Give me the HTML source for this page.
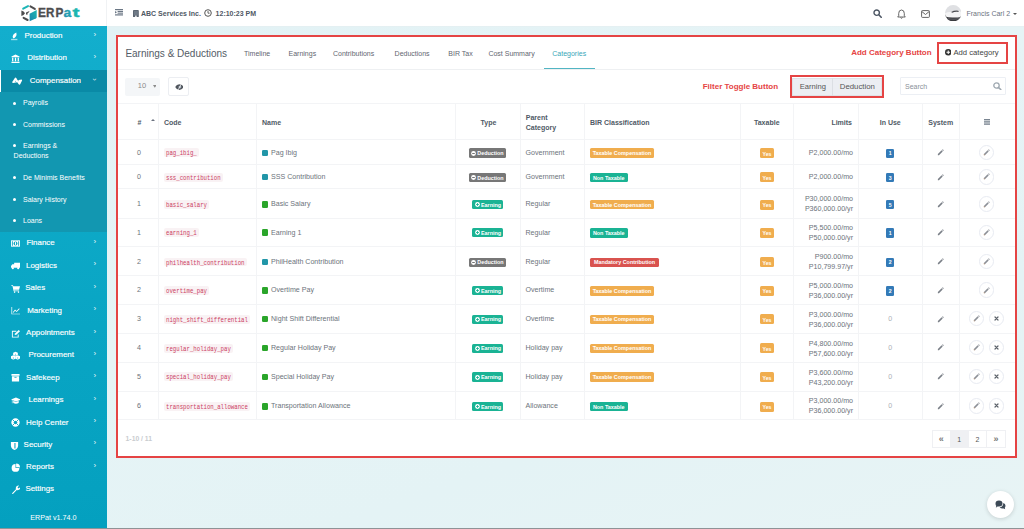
<!DOCTYPE html>
<html><head><meta charset="utf-8">
<style>
*{box-sizing:border-box}
html,body{margin:0;padding:0}
body{width:1024px;height:529px;overflow:hidden;position:relative;font-family:"Liberation Sans",sans-serif;background:#e6f2f5}
.abs{position:absolute}
#bg{position:absolute;left:107px;top:26px;width:917px;height:503px;background:linear-gradient(160deg,#e2f2f5 0%,#e6f4f6 40%,#e4f3f5 70%,#e8f4f5 100%)}
#hdr{position:absolute;left:0;top:0;width:1024px;height:26px;background:#fff;box-shadow:0 0.5px 0 #e6eef0}
#logo{position:absolute;left:0;top:0;width:107px;height:26px;border-right:1px solid #f0f2f4}
#side{position:absolute;left:0;top:26px;width:107px;height:503px;background:linear-gradient(180deg,#13aecd 0%,#0eaac8 30%,#09a5c4 60%,#04a0bf 100%)}
#sub{position:absolute;left:0;top:92px;width:107px;height:139.6px;background:#1297b1}
#act{position:absolute;left:0;top:69.7px;width:107px;height:22.3px;background:#0a8aa6;border-left:1.5px solid #fff}
.si{position:absolute;color:#fff;font-size:7.95px;line-height:9px;white-space:nowrap;font-weight:normal;-webkit-text-stroke:0.2px rgba(255,255,255,0.85)}
.ss{position:absolute;color:#fff;font-size:7px;line-height:8px;white-space:nowrap}
.sic{position:absolute}
.chev{position:absolute;left:93.5px;color:#fff;font-size:8px;line-height:9px;opacity:0.9}
.bul{position:absolute;left:13px;width:3px;height:3px;border-radius:50%;background:#fff}
#card{position:absolute;left:118px;top:37px;width:897px;height:419px;background:#fff}
#redc{position:absolute;left:116px;top:35px;width:901px;height:423px;border:2px solid #e54444}
.hl{position:absolute;left:118px;width:897px;height:1px;background:#f3f4f6}
.vl{position:absolute;width:1px;background:#f3f4f6}
.th{position:absolute;font-size:7px;font-weight:bold;color:#505a66;line-height:8px;white-space:nowrap}
.td{position:absolute;font-size:7.1px;color:#6c737b;line-height:9px;white-space:nowrap}
.code{position:absolute;font-family:"Liberation Mono",monospace;font-size:5.7px;height:8.9px;line-height:9.3px;color:#cc3d62;background:#f9f2f4;padding:0 2px;border-radius:2px;white-space:nowrap}
.code span{display:inline-block;transform:translateY(0.5px) scaleY(1.18);}
.sq{position:absolute;width:6.5px;height:6.5px;border-radius:1.3px}
.cell{position:absolute;height:10px}
.lb{position:absolute;top:0;height:9.4px;border-radius:1.5px;color:#fff;font-size:5.4px;font-weight:bold;line-height:9.4px;padding-top:0.7px;white-space:nowrap;padding-left:9px}
.lb .ci{position:absolute;top:2.2px}
.lb2{position:absolute;left:0;top:0;height:9.5px;border-radius:1.5px;color:#fff;font-size:5.4px;font-weight:bold;line-height:9.5px;padding-top:0.7px;white-space:nowrap;text-align:center}
.yes{position:absolute;width:14px;height:10px;background:#f0ad4e;border-radius:1.5px;color:#fff;font-size:5.2px;font-weight:bold;line-height:10px;padding-top:0.6px;text-align:center}
.iu{position:absolute;width:8.3px;height:9.3px;background:#337ab7;border-radius:1.3px;color:#fff;font-size:5.2px;font-weight:bold;line-height:9.3px;padding-top:0.6px;text-align:center}
.pen{position:absolute;width:7px;height:7px;line-height:0}
.cb{position:absolute;width:15.4px;height:15.4px;border:1px solid #e8ebf2;border-radius:50%;display:flex;align-items:center;justify-content:center;background:#fff}
.sortc{position:absolute;width:0;height:0;border-left:2px solid transparent;border-right:2px solid transparent;border-bottom:2.5px solid #6b7280}
.menuic{position:absolute;width:6px;height:5px;border-top:1.2px solid #505a66;border-bottom:1.2px solid #505a66}
.menuic:after{content:"";position:absolute;left:0;top:0.7px;width:6px;height:1.2px;background:#505a66}
.tab{position:absolute;top:48.8px;font-size:7px;color:#5f6670;white-space:nowrap;line-height:9px}
.red{position:absolute;color:#e54444;font-weight:bold;font-size:8px;white-space:nowrap;line-height:9px}
.pg{position:absolute;top:430.3px;height:17.5px;border:1px solid #eff0f3;font-size:7px;color:#555;line-height:17px;text-align:center}
</style></head><body>
<div id="bg"></div>
<div id="hdr"></div>
<div id="logo">
 <svg class="abs" style="left:18px;top:2.5px" width="22" height="20" viewBox="0 0 22 20">
  <defs><linearGradient id="lg1" x1="0" y1="1" x2="1" y2="0"><stop offset="0" stop-color="#1a86ae"/><stop offset="1" stop-color="#1cb8b0"/></linearGradient></defs>
  <path d="M5.2 5.7 L10 3.1" stroke="#1db6b6" stroke-width="2" stroke-linecap="round"/>
  <path d="M12.4 3.4 L16.8 5.9" stroke="#4d4d4f" stroke-width="2" stroke-linecap="round"/>
  <path d="M3.4 7.6 L5.6 8.5 L7 10.3 L5.6 12.1 L3.4 13 Z" fill="#4d4d4f"/>
  <path d="M8 9.4 L11.5 8 L10.8 9.6 L9.7 10.1 L9.4 11.8 L8 11.5 Z" fill="#4d4d4f"/>
  <path d="M5.6 14.8 L9.6 17" stroke="#4d4d4f" stroke-width="2" stroke-linecap="round"/>
  <path d="M11.6 10.8 L18.7 7 L18.7 14.5 Q18.6 15 18.2 15.2 L11.6 18.2 Z" fill="url(#lg1)"/>
 </svg>
 <svg class="abs" style="left:0;top:0" width="107" height="26" viewBox="0 0 107 26">
  <defs><linearGradient id="lg2" x1="0" y1="1" x2="1" y2="0"><stop offset="0" stop-color="#2a8db0"/><stop offset="1" stop-color="#1bb5b2"/></linearGradient></defs>
  <g font-family="Liberation Sans" font-weight="bold" font-size="13.2" stroke-width="0.35">
   <text transform="translate(38 17.3) scale(0.9 1)" fill="#4d4d4f" stroke="#4d4d4f">E</text>
   <text transform="translate(46.1 17.3) scale(0.88 1)" fill="#4d4d4f" stroke="#4d4d4f">R</text>
   <text transform="translate(55.6 17.3) scale(0.9 1)" fill="#4d4d4f" stroke="#4d4d4f">P</text>
   <text transform="translate(63.6 17.3) scale(1.05 1)" fill="url(#lg2)" stroke="#2597b0">a</text>
   <text transform="translate(72.6 17.3) scale(1.6 1)" fill="#1bb6b0" stroke="#1bb6b0">t</text>
  </g>
 </svg>
</div>
<!-- header content -->
<svg class="abs" style="left:115px;top:9.3px" width="8" height="6.5" viewBox="0 0 8 6.5"><rect x="0" y="0" width="8" height="1.2" fill="#6b7785"/><rect x="2.6" y="1.9" width="5.4" height="1.1" fill="#6b7785"/><rect x="2.6" y="3.6" width="5.4" height="1.1" fill="#6b7785"/><path d="M0 1.9 L2 3.25 L0 4.6 Z" fill="#6b7785"/><rect x="0" y="5.3" width="8" height="1.2" fill="#6b7785"/></svg>
<svg class="abs" style="left:133.2px;top:9.5px" width="5.8" height="7.2" viewBox="0 0 5.8 7.2"><rect x="0" y="0" width="5.8" height="7.2" rx="0.8" fill="#5a6470"/><rect x="0.9" y="0.8" width="4" height="4.5" fill="#6f7a86"/><rect x="2.2" y="5.6" width="1.4" height="1.6" fill="#fff"/></svg>
<div class="abs" style="left:141px;top:9px;font-size:7px;font-weight:bold;color:#4f5864;line-height:9px;white-space:nowrap">ABC Services Inc.</div>
<svg class="abs" style="left:203.8px;top:9px" width="8" height="8" viewBox="0 0 8 8"><circle cx="4" cy="4" r="3.3" fill="none" stroke="#555" stroke-width="1"/><path d="M4 2 V4.2 H5.6" fill="none" stroke="#555" stroke-width="0.9"/></svg>
<div class="abs" style="left:215.6px;top:9px;font-size:7px;font-weight:bold;color:#4f5864;line-height:9px;white-space:nowrap">12:10:23 PM</div>
<svg class="abs" style="left:872.5px;top:9px" width="9" height="9" viewBox="0 0 9 9"><circle cx="3.7" cy="3.7" r="2.7" fill="none" stroke="#4b5563" stroke-width="1.4"/><path d="M5.8 5.8 L8.2 8.2" stroke="#4b5563" stroke-width="1.6" stroke-linecap="round"/></svg>
<svg class="abs" style="left:896.5px;top:8.5px" width="9" height="10" viewBox="0 0 9 10"><path d="M4.5 1 Q7.3 1 7.3 4.5 V6.8 L8.3 8 H0.7 L1.7 6.8 V4.5 Q1.7 1 4.5 1 Z" fill="none" stroke="#555" stroke-width="0.9"/><path d="M3.5 8.6 Q4.5 10 5.5 8.6" fill="none" stroke="#555" stroke-width="0.9"/></svg>
<svg class="abs" style="left:920.5px;top:9.5px" width="9" height="8" viewBox="0 0 9 8"><rect x="0.6" y="0.6" width="7.8" height="6.8" rx="0.8" fill="none" stroke="#555" stroke-width="0.9"/><path d="M0.8 1.5 L4.5 4.5 L8.2 1.5" fill="none" stroke="#555" stroke-width="0.9"/></svg>
<svg class="abs" style="left:944.9px;top:4.5px" width="16.4" height="16.4" viewBox="0 0 16 16"><defs><clipPath id="av"><circle cx="8" cy="8" r="8"/></clipPath></defs><g clip-path="url(#av)"><rect width="16" height="16" fill="#dfe0e3"/><rect y="9.5" width="16" height="7" fill="#3a3b3f"/><path d="M0 8 Q3 6.5 6 6.8 Q9 5 13 5.5 Q15.5 6 16 7.5 L16 11.5 Q12 12.5 8 12.2 Q3 12.3 0 11 Z" fill="#f4f4f5"/><path d="M6 6.8 Q9 5 13 5.5 L13.5 6.8 Q10 6.2 7 7.5 Z" fill="#4a4b50"/><path d="M2 12.5 Q8 14 14 12.5 L14 14 Q8 15.2 2 14 Z" fill="#55565b"/></g></svg>
<div class="abs" style="left:966.5px;top:9.3px;font-size:7px;color:#6b7280;line-height:9px;white-space:nowrap">Francis Carl 2</div>
<div class="abs" style="left:1012.5px;top:12.5px;width:0;height:0;border-left:2.3px solid transparent;border-right:2.3px solid transparent;border-top:2.6px solid #555"></div>

<div id="side"></div>
<div id="sub"></div>
<div id="act"></div>
<div class="si" style="left:24.5px;top:31.1px">Production</div>
<svg class="sic" style="left:10.5px;top:32.199999999999996px" width="9" height="9" viewBox="0 0 10 10"><path d="M5.9 0.6 Q6.8 3.2 5.2 5.2 Q3.8 7 2.3 6.9 Q1.3 5.2 2.5 3.1 Q3.8 1.3 5.9 0.6 Z" fill="#fff"/><rect x="0.1" y="7.6" width="7" height="1.5" fill="rgba(255,255,255,0.6)"/></svg>
<div class="chev" style="top:29.6px">&#8250;</div>
<div class="si" style="left:27.2px;top:53.3px">Distribution</div>
<svg class="sic" style="left:11.0px;top:53.8px" width="9" height="9" viewBox="0 0 10 10"><path d="M5 0.5 L9.5 2.8 V3.6 H0.5 V2.8 Z M1.2 4.2 H2.6 V8 H1.2 Z M4.3 4.2 H5.7 V8 H4.3 Z M7.4 4.2 H8.8 V8 H7.4 Z M0.5 8.5 H9.5 V10 H0.5 Z" fill="#fff"/></svg>
<div class="chev" style="top:51.8px">&#8250;</div>
<div class="si" style="left:29.8px;top:75.7px">Compensation</div>
<svg class="sic" style="left:11.7px;top:76.89999999999999px" width="11" height="10" viewBox="0 0 11 10"><path d="M0.2 5 L3 0.8 Q3.6 0.3 4.3 0.9 L5.6 3.2 L9.3 2.4 Q10.3 2.4 10.1 3.4 L8.2 7.3 Q7.6 8 6.9 7.4 L5.2 5.2 L1.2 6 Q0 6 0.2 5 Z" fill="#fff"/><circle cx="3.6" cy="4.2" r="0.45" fill="#0a8aa6"/><circle cx="6.3" cy="3.7" r="0.45" fill="#0a8aa6"/></svg>
<div class="chev" style="top:74.7px;transform:rotate(90deg);left:93px">&#8250;</div>
<div class="si" style="left:26.5px;top:238.3px">Finance</div>
<svg class="sic" style="left:10.8px;top:238.8px" width="9" height="9" viewBox="0 0 10 10"><path d="M0 1.5 H10 V8.5 H0 Z" fill="#fff"/><circle cx="5" cy="5" r="2.2" fill="#0ea5c0"/><path d="M1 2.5 H2 V7.5 H1 Z M8 2.5 H9 V7.5 H8 Z" fill="#0ea5c0"/><rect x="4.4" y="3.5" width="1.2" height="3" fill="#fff"/></svg>
<div class="chev" style="top:236.8px">&#8250;</div>
<div class="si" style="left:26.0px;top:260.7px">Logistics</div>
<svg class="sic" style="left:11.0px;top:261.3px" width="9" height="9" viewBox="0 0 10 10"><path d="M3.5 2 H10 V7.5 H3.5 Z M3.5 3.5 H1.5 L0 5.5 V7.5 H3.5 Z" fill="#fff"/><circle cx="2" cy="8" r="1.2" fill="#fff"/><circle cx="8" cy="8" r="1.2" fill="#fff"/></svg>
<div class="chev" style="top:259.2px">&#8250;</div>
<div class="si" style="left:25.3px;top:283.1px">Sales</div>
<svg class="sic" style="left:11.0px;top:283.8px" width="9" height="9" viewBox="0 0 10 10"><path d="M0 1 H2 L2.6 2.5 H10 L9 6.5 H3.5 L3.8 7.3 H9 V8 H3 L1.5 1.8 H0 Z" fill="#fff"/><circle cx="4" cy="9" r="0.9" fill="#fff"/><circle cx="8.3" cy="9" r="0.9" fill="#fff"/></svg>
<div class="chev" style="top:281.6px">&#8250;</div>
<div class="si" style="left:27.2px;top:305.7px">Marketing</div>
<svg class="sic" style="left:10.8px;top:306.3px" width="9" height="9" viewBox="0 0 10 10"><path d="M0.5 1 V9.3 H10 V8.5 H1.3 V1 Z M2 7 L4.5 4 L6.2 5.5 L9 2.5 L9.6 3.2 L6.3 6.8 L4.6 5.3 L2.6 7.6 Z" fill="#fff"/></svg>
<div class="chev" style="top:304.2px">&#8250;</div>
<div class="si" style="left:26.1px;top:328.0px">Appointments</div>
<svg class="sic" style="left:10.8px;top:328.8px" width="9" height="9" viewBox="0 0 10 10"><path d="M1 2 H6 V3 H2 V8.5 H7.5 V6 H8.5 V9.5 H1 Z" fill="#fff"/><path d="M4 6.8 L4.5 5 L8.5 1 L10 2.5 L6 6.5 Z" fill="#fff"/></svg>
<div class="chev" style="top:326.5px">&#8250;</div>
<div class="si" style="left:28.5px;top:350.4px">Procurement</div>
<svg class="sic" style="left:11.0px;top:351.1px" width="9" height="9" viewBox="0 0 10 10"><path d="M5 0.8 L7.6 2 V4.4 L5 5.6 L2.4 4.4 V2 Z" fill="#fff"/><path d="M2.6 4.6 L5.2 5.8 V8.4 L2.6 9.6 L0 8.4 V5.8 Z" fill="#fff"/><path d="M7.4 4.6 L10 5.8 V8.4 L7.4 9.6 L4.8 8.4 V5.8 Z" fill="#fff"/><path d="M2.6 6.8 V9.4 M7.4 6.8 V9.4 M5 3 V5.4" stroke="#0ba5c3" stroke-width="0.5"/></svg>
<div class="chev" style="top:348.9px">&#8250;</div>
<div class="si" style="left:26.1px;top:372.7px">Safekeep</div>
<svg class="sic" style="left:11.3px;top:373.1px" width="9" height="9" viewBox="0 0 10 10"><path d="M0.5 1 H9.5 V3 H0.5 Z M1 3.5 H9 V9.5 H1 Z" fill="#fff"/><rect x="3.8" y="4.3" width="2.4" height="0.9" fill="#0ea5c0"/></svg>
<div class="chev" style="top:371.2px">&#8250;</div>
<div class="si" style="left:28.5px;top:395.1px">Learnings</div>
<svg class="sic" style="left:11.0px;top:395.8px" width="9" height="9" viewBox="0 0 10 10"><path d="M0 4 L5.5 1.8 L11 4 L5.5 6.2 Z M2.5 5.2 V7.8 Q5.5 9.6 8.5 7.8 V5.2 L5.5 6.8 Z M1 4.5 V8 H1.6 V4.7 Z" fill="#fff"/></svg>
<div class="chev" style="top:393.6px">&#8250;</div>
<div class="si" style="left:26.1px;top:417.5px">Help Center</div>
<svg class="sic" style="left:10.8px;top:418.3px" width="9" height="9" viewBox="0 0 10 10"><circle cx="5" cy="5" r="4.6" fill="#fff"/><circle cx="5" cy="5" r="2" fill="#0aa2c0"/><path d="M1.6 1.6 L3.4 3.4 M8.4 1.6 L6.6 3.4 M1.6 8.4 L3.4 6.6 M8.4 8.4 L6.6 6.6" stroke="#0aa2c0" stroke-width="1"/></svg>
<div class="chev" style="top:416.0px">&#8250;</div>
<div class="si" style="left:23.6px;top:439.9px">Security</div>
<svg class="sic" style="left:10.0px;top:440.8px" width="9" height="9" viewBox="0 0 10 10"><path d="M1 1 H9 V5 Q9 8.5 5 10 Q1 8.5 1 5 Z" fill="#fff"/><path d="M5.5 2.2 V8.2" stroke="#0ea5c0" stroke-width="1.2"/></svg>
<div class="chev" style="top:438.4px">&#8250;</div>
<div class="si" style="left:26.1px;top:462.2px">Reports</div>
<svg class="sic" style="left:10.5px;top:463.1px" width="9" height="9" viewBox="0 0 10 10"><circle cx="5" cy="5.5" r="4.3" fill="#fff"/><path d="M5 5.5 V1.2 A4.3 4.3 0 0 1 9.3 5.5 Z" fill="#0ea5c0"/><path d="M5.7 4.8 V0.5 A4.3 4.3 0 0 1 10 4.8 Z" fill="#fff"/></svg>
<div class="chev" style="top:460.7px">&#8250;</div>
<div class="si" style="left:25.4px;top:484.4px">Settings</div>
<svg class="sic" style="left:10.8px;top:485.3px" width="9" height="9" viewBox="0 0 10 10"><path d="M1.5 8.8 L5.5 4.8 Q4.8 2.5 6.5 1.2 Q7.8 0.4 9 0.8 L7.3 2.5 L7.8 3.4 L8.7 3.9 L10.4 2.2 Q10.8 3.6 9.8 4.8 Q8.5 6 6.4 5.6 L2.4 9.7 Q1.9 10.1 1.4 9.7 Q1 9.2 1.5 8.8 Z" fill="#fff"/></svg>
<div class="bul" style="top:102px"></div>
<div class="ss" style="left:23px;top:99.3px">Payrolls</div>
<div class="bul" style="top:123px"></div>
<div class="ss" style="left:23px;top:121.1px">Commissions</div>
<div class="bul" style="top:144px"></div>
<div class="ss" style="left:23px;top:142.3px">Earnings &amp;</div>
<div class="bul" style="top:176px"></div>
<div class="ss" style="left:23px;top:173.9px">De Minimis Benefits</div>
<div class="bul" style="top:198px"></div>
<div class="ss" style="left:23px;top:195.9px">Salary History</div>
<div class="bul" style="top:219px"></div>
<div class="ss" style="left:23px;top:217.10000000000002px">Loans</div>
<div class="ss" style="left:13.6px;top:152.4px">Deductions</div>
<div class="ss" style="left:30.2px;top:513.5px;font-size:7.2px;line-height:8px">ERPat v1.74.0</div>

<div id="card"></div>
<!-- title & tabs -->
<div class="abs" style="left:125.4px;top:47.7px;font-size:10px;color:#545c66;line-height:12px;white-space:nowrap">Earnings &amp; Deductions</div>
<div class="tab" style="left:244px">Timeline</div>
<div class="tab" style="left:288.5px">Earnings</div>
<div class="tab" style="left:333px">Contributions</div>
<div class="tab" style="left:394.6px">Deductions</div>
<div class="tab" style="left:448.3px">BIR Tax</div>
<div class="tab" style="left:488.4px">Cost Summary</div>
<div class="tab" style="left:552.3px;color:#3aa7b8">Categories</div>
<div class="abs" style="left:544px;top:68px;width:51px;height:1.6px;background:#52b5c3"></div>
<div class="abs" style="left:118px;top:68.5px;width:897px;height:1px;background:#eef0f2"></div>
<div class="red" style="left:851.2px;top:48px">Add Category Button</div>
<div class="abs" style="left:936.6px;top:41.8px;width:71px;height:22px;border:2px solid #e54444"></div>
<svg class="abs" style="left:944.8px;top:49px" width="6.5" height="6.5" viewBox="0 0 10 10"><circle cx="5" cy="5" r="5" fill="#333"/><path d="M5 2.3 V7.7 M2.3 5 H7.7" stroke="#fff" stroke-width="1.6"/></svg>
<div class="abs" style="left:953.4px;top:48px;font-size:7.7px;color:#444;line-height:9px;white-space:nowrap">Add category</div>

<!-- toolbar -->
<div class="abs" style="left:125.3px;top:77.5px;width:35px;height:18px;background:#f4f6f8;border-radius:2px"></div>
<div class="abs" style="left:137.8px;top:82.3px;font-size:7.5px;color:#8a8a8a;line-height:8px">10</div>
<svg class="abs" style="left:152.5px;top:85px" width="3.6" height="2.8" viewBox="0 0 3.6 2.8"><path d="M0 0 H3.6 L1.8 2.8 Z" fill="#8a8a8a"/></svg>
<div class="abs" style="left:168.4px;top:77.3px;width:20.8px;height:18.3px;border:1px solid #eceef2;border-radius:2px;background:#fff"></div>
<svg class="abs" style="left:174.6px;top:83.6px" width="8.8" height="6.2" viewBox="0 0 8.8 6.2"><path d="M0.2 3.1 Q1.5 0.3 4.4 0.3 Q7.3 0.3 8.6 3.1 Q7.3 5.9 4.4 5.9 Q1.5 5.9 0.2 3.1 Z" fill="#50555d"/><circle cx="4.9" cy="3.1" r="1.4" fill="#aab3be"/><path d="M3 6 L6.2 0.2" stroke="#fff" stroke-width="0.7"/></svg>

<div class="red" style="left:702.7px;top:82px">Filter Toggle Button</div>
<div class="abs" style="left:792.3px;top:77.5px;width:89.8px;height:18px;background:#eceef3;border:1px solid #dfe2e7"></div>
<div class="abs" style="left:832.4px;top:77.5px;width:1px;height:18px;background:#dcdfe4"></div>
<div class="abs" style="left:799.7px;top:82.3px;font-size:7.6px;color:#555;line-height:9px">Earning</div>
<div class="abs" style="left:839.8px;top:82.3px;font-size:7.8px;color:#555;line-height:9px">Deduction</div>
<div class="abs" style="left:790.3px;top:75.3px;width:93.8px;height:22.5px;border:2px solid #e54444"></div>
<div class="abs" style="left:899.5px;top:77.3px;width:106.3px;height:18.1px;border:1px solid #eceff4;border-radius:1px;background:#fff"></div>
<div class="abs" style="left:905px;top:81.6px;font-size:7px;color:#8a9099;line-height:9px">Search</div>
<svg class="abs" style="left:993.3px;top:82.4px" width="8.5" height="8" viewBox="0 0 8.5 8"><circle cx="3.5" cy="3.5" r="2.7" fill="none" stroke="#9ea8b0" stroke-width="1.3"/><path d="M5.6 5.6 L7.8 7.6" stroke="#9ea8b0" stroke-width="1.5" stroke-linecap="round"/></svg>

<div class="hl" style="top:103px"></div>
<div class="hl" style="top:139px"></div>
<div class="hl" style="top:163.6px"></div>
<div class="hl" style="top:188px"></div>
<div class="hl" style="top:218px"></div>
<div class="hl" style="top:246px"></div>
<div class="hl" style="top:275px"></div>
<div class="hl" style="top:304px"></div>
<div class="hl" style="top:333px"></div>
<div class="hl" style="top:362px"></div>
<div class="hl" style="top:390.6px"></div>
<div class="hl" style="top:419px"></div>
<div class="vl" style="left:157.5px;top:103px;height:316px"></div>
<div class="vl" style="left:255.5px;top:103px;height:316px"></div>
<div class="vl" style="left:454.5px;top:103px;height:316px"></div>
<div class="vl" style="left:519.5px;top:103px;height:316px"></div>
<div class="vl" style="left:584.0px;top:103px;height:316px"></div>
<div class="vl" style="left:739.5px;top:103px;height:316px"></div>
<div class="vl" style="left:793.0px;top:103px;height:316px"></div>
<div class="vl" style="left:858.0px;top:103px;height:316px"></div>
<div class="vl" style="left:921.5px;top:103px;height:316px"></div>
<div class="vl" style="left:959.0px;top:103px;height:316px"></div>
<div class="th" style="left:137.5px;top:118.75px">#</div>
<div class="sortc" style="left:151px;top:118.75px"></div>
<div class="th" style="left:164px;top:118.75px;">Code</div>
<div class="th" style="left:262px;top:118.75px;">Name</div>
<div class="th" style="left:455px;width:65px;text-align:center;top:118.75px;padding-left:2px">Type</div>
<div class="th" style="left:525.8px;top:112.75px;line-height:9.8px">Parent<br>Category</div>
<div class="th" style="left:590.0px;top:118.75px;">BIR Classification</div>
<div class="th" style="left:740px;width:53.5px;text-align:center;top:118.75px;">Taxable</div>
<div class="th" style="left:793.5px;width:58.5px;text-align:right;top:118.75px;">Limits</div>
<div class="th" style="left:858.5px;width:63.5px;text-align:center;top:118.75px;">In Use</div>
<div class="th" style="left:922px;width:37.5px;text-align:center;top:118.75px;">System</div>
<svg class="abs" style="left:983.8px;top:119px" width="6.2" height="5.8" viewBox="0 0 6.2 5.8"><rect y="0" width="6.2" height="1.4" fill="#7a8591"/><rect y="2.2" width="6.2" height="1.4" fill="#7a8591"/><rect y="4.4" width="6.2" height="1.4" fill="#7a8591"/></svg>
<div class="td" style="left:118px;width:40px;text-align:center;top:148.85px;padding-left:2px">0</div>
<div class="code" style="left:164px;top:148.45px"><span>pag_ibig_</span></div>
<div class="sq" style="left:261.5px;top:149.55px;background:#2196a8"></div>
<div class="td" style="left:271px;top:148.85px">Pag Ibig</div>
<div class="cell" style="left:455px;top:148.45px"><span class="lb" style="background:#777;left:13.7px;width:37.4px;padding-left:8.6px"><svg class="ci" style="left:2.7px" width="5" height="5" viewBox="0 0 5 5"><circle cx="2.5" cy="2.5" r="2.4" fill="#fff"/><path d="M1.2 2.5 H3.8" stroke="#777" stroke-width="1"/></svg>Deduction</span></div>
<div class="td" style="left:525.5px;top:148.85px">Government</div>
<div class="cell" style="left:590px;top:148.45px"><span class="lb2" style="background:#f0ad4e;width:64px">Taxable Compensation</span></div>
<div class="yes" style="left:760px;top:148.05px">Yes</div>
<div class="td" style="left:793.5px;width:59.5px;text-align:right;top:148.85px">P2,000.00/mo</div>
<div class="iu" style="left:886px;top:148.65px">1</div>
<div class="pen" style="left:937px;top:149.25px"><svg width="7" height="7" viewBox="0 0 16 16"><path d="M2 11.5 L10.5 3 L13 5.5 L4.5 14 L2 14 Z" fill="#7a7f87"/><path d="M11.5 2 L12.5 1 Q13 0.5 13.5 1 L15 2.5 Q15.5 3 15 3.5 L14 4.5 Z" fill="#7a7f87"/></svg></div>
<div class="cb" style="left:978.9px;top:144.85px"><svg width="7" height="7" viewBox="0 0 16 16"><path d="M2 11.5 L10.5 3 L13 5.5 L4.5 14 L2 14 Z" fill="#8c9097"/><path d="M2 11.5 L4.5 14 L2 14 Z" fill="#d9a77a"/><path d="M11.5 2 L12.5 1 Q13 0.5 13.5 1 L15 2.5 Q15.5 3 15 3.5 L14 4.5 Z" fill="#8c9097"/></svg></div>
<div class="td" style="left:118px;width:40px;text-align:center;top:173.25px;padding-left:2px">0</div>
<div class="code" style="left:164px;top:172.85px"><span>sss_contribution</span></div>
<div class="sq" style="left:261.5px;top:173.95000000000002px;background:#2196a8"></div>
<div class="td" style="left:271px;top:173.25px">SSS Contribution</div>
<div class="cell" style="left:455px;top:172.85px"><span class="lb" style="background:#777;left:13.7px;width:37.4px;padding-left:8.6px"><svg class="ci" style="left:2.7px" width="5" height="5" viewBox="0 0 5 5"><circle cx="2.5" cy="2.5" r="2.4" fill="#fff"/><path d="M1.2 2.5 H3.8" stroke="#777" stroke-width="1"/></svg>Deduction</span></div>
<div class="td" style="left:525.5px;top:173.25px">Government</div>
<div class="cell" style="left:590px;top:172.85px"><span class="lb2" style="background:#1ab394;width:37.5px">Non Taxable</span></div>
<div class="yes" style="left:760px;top:172.45000000000002px">Yes</div>
<div class="td" style="left:793.5px;width:59.5px;text-align:right;top:173.25px">P2,000.00/mo</div>
<div class="iu" style="left:886px;top:173.05px">3</div>
<div class="pen" style="left:937px;top:173.65px"><svg width="7" height="7" viewBox="0 0 16 16"><path d="M2 11.5 L10.5 3 L13 5.5 L4.5 14 L2 14 Z" fill="#7a7f87"/><path d="M11.5 2 L12.5 1 Q13 0.5 13.5 1 L15 2.5 Q15.5 3 15 3.5 L14 4.5 Z" fill="#7a7f87"/></svg></div>
<div class="cb" style="left:978.9px;top:169.25px"><svg width="7" height="7" viewBox="0 0 16 16"><path d="M2 11.5 L10.5 3 L13 5.5 L4.5 14 L2 14 Z" fill="#8c9097"/><path d="M2 11.5 L4.5 14 L2 14 Z" fill="#d9a77a"/><path d="M11.5 2 L12.5 1 Q13 0.5 13.5 1 L15 2.5 Q15.5 3 15 3.5 L14 4.5 Z" fill="#8c9097"/></svg></div>
<div class="td" style="left:118px;width:40px;text-align:center;top:200.35px;padding-left:2px">1</div>
<div class="code" style="left:164px;top:199.95px"><span>basic_salary</span></div>
<div class="sq" style="left:261.5px;top:201.05px;background:#2aa52a"></div>
<div class="td" style="left:271px;top:200.35px">Basic Salary</div>
<div class="cell" style="left:455px;top:199.95px"><span class="lb" style="background:#1ab394;left:17px;width:31px;padding-left:9px"><svg class="ci" style="left:2.7px" width="5" height="5" viewBox="0 0 5 5"><circle cx="2.5" cy="2.5" r="2.4" fill="#fff"/><path d="M1.2 2.5 H3.8 M2.5 1.2 V3.8" stroke="#1ab394" stroke-width="1"/></svg>Earning</span></div>
<div class="td" style="left:525.5px;top:200.35px">Regular</div>
<div class="cell" style="left:590px;top:199.95px"><span class="lb2" style="background:#f0ad4e;width:64px">Taxable Compensation</span></div>
<div class="yes" style="left:760px;top:199.55px">Yes</div>
<div class="td" style="left:793.5px;width:59.5px;text-align:right;top:194.15px;line-height:10px">P30,000.00/mo<br>P360,000.00/yr</div>
<div class="iu" style="left:886px;top:200.15px">5</div>
<div class="pen" style="left:937px;top:200.75px"><svg width="7" height="7" viewBox="0 0 16 16"><path d="M2 11.5 L10.5 3 L13 5.5 L4.5 14 L2 14 Z" fill="#7a7f87"/><path d="M11.5 2 L12.5 1 Q13 0.5 13.5 1 L15 2.5 Q15.5 3 15 3.5 L14 4.5 Z" fill="#7a7f87"/></svg></div>
<div class="cb" style="left:978.9px;top:196.35px"><svg width="7" height="7" viewBox="0 0 16 16"><path d="M2 11.5 L10.5 3 L13 5.5 L4.5 14 L2 14 Z" fill="#8c9097"/><path d="M2 11.5 L4.5 14 L2 14 Z" fill="#d9a77a"/><path d="M11.5 2 L12.5 1 Q13 0.5 13.5 1 L15 2.5 Q15.5 3 15 3.5 L14 4.5 Z" fill="#8c9097"/></svg></div>
<div class="td" style="left:118px;width:40px;text-align:center;top:228.49999999999997px;padding-left:2px">1</div>
<div class="code" style="left:164px;top:228.09999999999997px"><span>earning_1</span></div>
<div class="sq" style="left:261.5px;top:229.2px;background:#2aa52a"></div>
<div class="td" style="left:271px;top:228.49999999999997px">Earning 1</div>
<div class="cell" style="left:455px;top:228.09999999999997px"><span class="lb" style="background:#1ab394;left:17px;width:31px;padding-left:9px"><svg class="ci" style="left:2.7px" width="5" height="5" viewBox="0 0 5 5"><circle cx="2.5" cy="2.5" r="2.4" fill="#fff"/><path d="M1.2 2.5 H3.8 M2.5 1.2 V3.8" stroke="#1ab394" stroke-width="1"/></svg>Earning</span></div>
<div class="td" style="left:525.5px;top:228.49999999999997px">Regular</div>
<div class="cell" style="left:590px;top:228.09999999999997px"><span class="lb2" style="background:#1ab394;width:37.5px">Non Taxable</span></div>
<div class="yes" style="left:760px;top:227.7px">Yes</div>
<div class="td" style="left:793.5px;width:59.5px;text-align:right;top:223.29999999999998px;line-height:10px">P5,500.00/mo<br>P50,000.00/yr</div>
<div class="iu" style="left:886px;top:228.29999999999998px">1</div>
<div class="pen" style="left:937px;top:228.89999999999998px"><svg width="7" height="7" viewBox="0 0 16 16"><path d="M2 11.5 L10.5 3 L13 5.5 L4.5 14 L2 14 Z" fill="#7a7f87"/><path d="M11.5 2 L12.5 1 Q13 0.5 13.5 1 L15 2.5 Q15.5 3 15 3.5 L14 4.5 Z" fill="#7a7f87"/></svg></div>
<div class="cb" style="left:978.9px;top:224.49999999999997px"><svg width="7" height="7" viewBox="0 0 16 16"><path d="M2 11.5 L10.5 3 L13 5.5 L4.5 14 L2 14 Z" fill="#8c9097"/><path d="M2 11.5 L4.5 14 L2 14 Z" fill="#d9a77a"/><path d="M11.5 2 L12.5 1 Q13 0.5 13.5 1 L15 2.5 Q15.5 3 15 3.5 L14 4.5 Z" fill="#8c9097"/></svg></div>
<div class="td" style="left:118px;width:40px;text-align:center;top:258.0px;padding-left:2px">2</div>
<div class="code" style="left:164px;top:257.59999999999997px"><span>philhealth_contribution</span></div>
<div class="sq" style="left:261.5px;top:258.7px;background:#2196a8"></div>
<div class="td" style="left:271px;top:258.0px">PhilHealth Contribution</div>
<div class="cell" style="left:455px;top:257.59999999999997px"><span class="lb" style="background:#777;left:13.7px;width:37.4px;padding-left:8.6px"><svg class="ci" style="left:2.7px" width="5" height="5" viewBox="0 0 5 5"><circle cx="2.5" cy="2.5" r="2.4" fill="#fff"/><path d="M1.2 2.5 H3.8" stroke="#777" stroke-width="1"/></svg>Deduction</span></div>
<div class="td" style="left:525.5px;top:258.0px">Regular</div>
<div class="cell" style="left:590px;top:257.59999999999997px"><span class="lb2" style="background:#d9534f;width:69px">Mandatory Contribution</span></div>
<div class="yes" style="left:760px;top:257.2px">Yes</div>
<div class="td" style="left:793.5px;width:59.5px;text-align:right;top:251.79999999999998px;line-height:10px">P900.00/mo<br>P10,799.97/yr</div>
<div class="iu" style="left:886px;top:257.79999999999995px">2</div>
<div class="pen" style="left:937px;top:258.4px"><svg width="7" height="7" viewBox="0 0 16 16"><path d="M2 11.5 L10.5 3 L13 5.5 L4.5 14 L2 14 Z" fill="#7a7f87"/><path d="M11.5 2 L12.5 1 Q13 0.5 13.5 1 L15 2.5 Q15.5 3 15 3.5 L14 4.5 Z" fill="#7a7f87"/></svg></div>
<div class="cb" style="left:978.9px;top:253.99999999999997px"><svg width="7" height="7" viewBox="0 0 16 16"><path d="M2 11.5 L10.5 3 L13 5.5 L4.5 14 L2 14 Z" fill="#8c9097"/><path d="M2 11.5 L4.5 14 L2 14 Z" fill="#d9a77a"/><path d="M11.5 2 L12.5 1 Q13 0.5 13.5 1 L15 2.5 Q15.5 3 15 3.5 L14 4.5 Z" fill="#8c9097"/></svg></div>
<div class="td" style="left:118px;width:40px;text-align:center;top:286.45000000000005px;padding-left:2px">2</div>
<div class="code" style="left:164px;top:286.05px"><span>overtime_pay</span></div>
<div class="sq" style="left:261.5px;top:287.15000000000003px;background:#2aa52a"></div>
<div class="td" style="left:271px;top:286.45000000000005px">Overtime Pay</div>
<div class="cell" style="left:455px;top:286.05px"><span class="lb" style="background:#1ab394;left:17px;width:31px;padding-left:9px"><svg class="ci" style="left:2.7px" width="5" height="5" viewBox="0 0 5 5"><circle cx="2.5" cy="2.5" r="2.4" fill="#fff"/><path d="M1.2 2.5 H3.8 M2.5 1.2 V3.8" stroke="#1ab394" stroke-width="1"/></svg>Earning</span></div>
<div class="td" style="left:525.5px;top:286.45000000000005px">Overtime</div>
<div class="cell" style="left:590px;top:286.05px"><span class="lb2" style="background:#f0ad4e;width:64px">Taxable Compensation</span></div>
<div class="yes" style="left:760px;top:285.65000000000003px">Yes</div>
<div class="td" style="left:793.5px;width:59.5px;text-align:right;top:280.75px;line-height:10px">P5,000.00/mo<br>P36,000.00/yr</div>
<div class="iu" style="left:886px;top:286.25px">2</div>
<div class="pen" style="left:937px;top:286.85px"><svg width="7" height="7" viewBox="0 0 16 16"><path d="M2 11.5 L10.5 3 L13 5.5 L4.5 14 L2 14 Z" fill="#7a7f87"/><path d="M11.5 2 L12.5 1 Q13 0.5 13.5 1 L15 2.5 Q15.5 3 15 3.5 L14 4.5 Z" fill="#7a7f87"/></svg></div>
<div class="cb" style="left:978.9px;top:282.45000000000005px"><svg width="7" height="7" viewBox="0 0 16 16"><path d="M2 11.5 L10.5 3 L13 5.5 L4.5 14 L2 14 Z" fill="#8c9097"/><path d="M2 11.5 L4.5 14 L2 14 Z" fill="#d9a77a"/><path d="M11.5 2 L12.5 1 Q13 0.5 13.5 1 L15 2.5 Q15.5 3 15 3.5 L14 4.5 Z" fill="#8c9097"/></svg></div>
<div class="td" style="left:118px;width:40px;text-align:center;top:315.1px;padding-left:2px">3</div>
<div class="code" style="left:164px;top:314.7px"><span>night_shift_differential</span></div>
<div class="sq" style="left:261.5px;top:315.8px;background:#2aa52a"></div>
<div class="td" style="left:271px;top:315.1px">Night Shift Differential</div>
<div class="cell" style="left:455px;top:314.7px"><span class="lb" style="background:#1ab394;left:17px;width:31px;padding-left:9px"><svg class="ci" style="left:2.7px" width="5" height="5" viewBox="0 0 5 5"><circle cx="2.5" cy="2.5" r="2.4" fill="#fff"/><path d="M1.2 2.5 H3.8 M2.5 1.2 V3.8" stroke="#1ab394" stroke-width="1"/></svg>Earning</span></div>
<div class="td" style="left:525.5px;top:315.1px">Overtime</div>
<div class="cell" style="left:590px;top:314.7px"><span class="lb2" style="background:#f0ad4e;width:64px">Taxable Compensation</span></div>
<div class="yes" style="left:760px;top:314.3px">Yes</div>
<div class="td" style="left:793.5px;width:59.5px;text-align:right;top:309.9px;line-height:10px">P3,000.00/mo<br>P36,000.00/yr</div>
<div class="td" style="left:858.5px;width:63.5px;text-align:center;top:315.1px;color:#aab0b6">0</div>
<div class="pen" style="left:937px;top:315.5px"><svg width="7" height="7" viewBox="0 0 16 16"><path d="M2 11.5 L10.5 3 L13 5.5 L4.5 14 L2 14 Z" fill="#7a7f87"/><path d="M11.5 2 L12.5 1 Q13 0.5 13.5 1 L15 2.5 Q15.5 3 15 3.5 L14 4.5 Z" fill="#7a7f87"/></svg></div>
<div class="cb" style="left:968.8px;top:311.1px"><svg width="7" height="7" viewBox="0 0 16 16"><path d="M2 11.5 L10.5 3 L13 5.5 L4.5 14 L2 14 Z" fill="#8c9097"/><path d="M2 11.5 L4.5 14 L2 14 Z" fill="#d9a77a"/><path d="M11.5 2 L12.5 1 Q13 0.5 13.5 1 L15 2.5 Q15.5 3 15 3.5 L14 4.5 Z" fill="#8c9097"/></svg></div>
<div class="cb" style="left:989px;top:311.1px"><svg width="5" height="5" viewBox="0 0 10 10"><path d="M2 2 L8 8 M8 2 L2 8" stroke="#5d636b" stroke-width="2.4" stroke-linecap="round"/></svg></div>
<div class="td" style="left:118px;width:40px;text-align:center;top:344.05px;padding-left:2px">4</div>
<div class="code" style="left:164px;top:343.65px"><span>regular_holiday_pay</span></div>
<div class="sq" style="left:261.5px;top:344.75px;background:#2aa52a"></div>
<div class="td" style="left:271px;top:344.05px">Regular Holiday Pay</div>
<div class="cell" style="left:455px;top:343.65px"><span class="lb" style="background:#1ab394;left:17px;width:31px;padding-left:9px"><svg class="ci" style="left:2.7px" width="5" height="5" viewBox="0 0 5 5"><circle cx="2.5" cy="2.5" r="2.4" fill="#fff"/><path d="M1.2 2.5 H3.8 M2.5 1.2 V3.8" stroke="#1ab394" stroke-width="1"/></svg>Earning</span></div>
<div class="td" style="left:525.5px;top:344.05px">Holiday pay</div>
<div class="cell" style="left:590px;top:343.65px"><span class="lb2" style="background:#f0ad4e;width:64px">Taxable Compensation</span></div>
<div class="yes" style="left:760px;top:343.25px">Yes</div>
<div class="td" style="left:793.5px;width:59.5px;text-align:right;top:338.84999999999997px;line-height:10px">P4,800.00/mo<br>P57,600.00/yr</div>
<div class="td" style="left:858.5px;width:63.5px;text-align:center;top:344.05px;color:#aab0b6">0</div>
<div class="pen" style="left:937px;top:344.45px"><svg width="7" height="7" viewBox="0 0 16 16"><path d="M2 11.5 L10.5 3 L13 5.5 L4.5 14 L2 14 Z" fill="#7a7f87"/><path d="M11.5 2 L12.5 1 Q13 0.5 13.5 1 L15 2.5 Q15.5 3 15 3.5 L14 4.5 Z" fill="#7a7f87"/></svg></div>
<div class="cb" style="left:968.8px;top:340.05px"><svg width="7" height="7" viewBox="0 0 16 16"><path d="M2 11.5 L10.5 3 L13 5.5 L4.5 14 L2 14 Z" fill="#8c9097"/><path d="M2 11.5 L4.5 14 L2 14 Z" fill="#d9a77a"/><path d="M11.5 2 L12.5 1 Q13 0.5 13.5 1 L15 2.5 Q15.5 3 15 3.5 L14 4.5 Z" fill="#8c9097"/></svg></div>
<div class="cb" style="left:989px;top:340.05px"><svg width="5" height="5" viewBox="0 0 10 10"><path d="M2 2 L8 8 M8 2 L2 8" stroke="#5d636b" stroke-width="2.4" stroke-linecap="round"/></svg></div>
<div class="td" style="left:118px;width:40px;text-align:center;top:372.8px;padding-left:2px">5</div>
<div class="code" style="left:164px;top:372.4px"><span>special_holiday_pay</span></div>
<div class="sq" style="left:261.5px;top:373.5px;background:#2aa52a"></div>
<div class="td" style="left:271px;top:372.8px">Special Holiday Pay</div>
<div class="cell" style="left:455px;top:372.4px"><span class="lb" style="background:#1ab394;left:17px;width:31px;padding-left:9px"><svg class="ci" style="left:2.7px" width="5" height="5" viewBox="0 0 5 5"><circle cx="2.5" cy="2.5" r="2.4" fill="#fff"/><path d="M1.2 2.5 H3.8 M2.5 1.2 V3.8" stroke="#1ab394" stroke-width="1"/></svg>Earning</span></div>
<div class="td" style="left:525.5px;top:372.8px">Holiday pay</div>
<div class="cell" style="left:590px;top:372.4px"><span class="lb2" style="background:#f0ad4e;width:64px">Taxable Compensation</span></div>
<div class="yes" style="left:760px;top:372.0px">Yes</div>
<div class="td" style="left:793.5px;width:59.5px;text-align:right;top:367.59999999999997px;line-height:10px">P3,600.00/mo<br>P43,200.00/yr</div>
<div class="td" style="left:858.5px;width:63.5px;text-align:center;top:372.8px;color:#aab0b6">0</div>
<div class="pen" style="left:937px;top:373.2px"><svg width="7" height="7" viewBox="0 0 16 16"><path d="M2 11.5 L10.5 3 L13 5.5 L4.5 14 L2 14 Z" fill="#7a7f87"/><path d="M11.5 2 L12.5 1 Q13 0.5 13.5 1 L15 2.5 Q15.5 3 15 3.5 L14 4.5 Z" fill="#7a7f87"/></svg></div>
<div class="cb" style="left:968.8px;top:368.8px"><svg width="7" height="7" viewBox="0 0 16 16"><path d="M2 11.5 L10.5 3 L13 5.5 L4.5 14 L2 14 Z" fill="#8c9097"/><path d="M2 11.5 L4.5 14 L2 14 Z" fill="#d9a77a"/><path d="M11.5 2 L12.5 1 Q13 0.5 13.5 1 L15 2.5 Q15.5 3 15 3.5 L14 4.5 Z" fill="#8c9097"/></svg></div>
<div class="cb" style="left:989px;top:368.8px"><svg width="5" height="5" viewBox="0 0 10 10"><path d="M2 2 L8 8 M8 2 L2 8" stroke="#5d636b" stroke-width="2.4" stroke-linecap="round"/></svg></div>
<div class="td" style="left:118px;width:40px;text-align:center;top:402.3px;padding-left:2px">6</div>
<div class="code" style="left:164px;top:401.9px"><span>transportation_allowance</span></div>
<div class="sq" style="left:261.5px;top:403.0px;background:#2aa52a"></div>
<div class="td" style="left:271px;top:402.3px">Transportation Allowance</div>
<div class="cell" style="left:455px;top:401.9px"><span class="lb" style="background:#1ab394;left:17px;width:31px;padding-left:9px"><svg class="ci" style="left:2.7px" width="5" height="5" viewBox="0 0 5 5"><circle cx="2.5" cy="2.5" r="2.4" fill="#fff"/><path d="M1.2 2.5 H3.8 M2.5 1.2 V3.8" stroke="#1ab394" stroke-width="1"/></svg>Earning</span></div>
<div class="td" style="left:525.5px;top:402.3px">Allowance</div>
<div class="cell" style="left:590px;top:401.9px"><span class="lb2" style="background:#1ab394;width:37.5px">Non Taxable</span></div>
<div class="yes" style="left:760px;top:401.5px">Yes</div>
<div class="td" style="left:793.5px;width:59.5px;text-align:right;top:396.09999999999997px;line-height:10px">P3,000.00/mo<br>P36,000.00/yr</div>
<div class="td" style="left:858.5px;width:63.5px;text-align:center;top:402.3px;color:#aab0b6">0</div>
<div class="pen" style="left:937px;top:402.7px"><svg width="7" height="7" viewBox="0 0 16 16"><path d="M2 11.5 L10.5 3 L13 5.5 L4.5 14 L2 14 Z" fill="#7a7f87"/><path d="M11.5 2 L12.5 1 Q13 0.5 13.5 1 L15 2.5 Q15.5 3 15 3.5 L14 4.5 Z" fill="#7a7f87"/></svg></div>
<div class="cb" style="left:968.8px;top:398.3px"><svg width="7" height="7" viewBox="0 0 16 16"><path d="M2 11.5 L10.5 3 L13 5.5 L4.5 14 L2 14 Z" fill="#8c9097"/><path d="M2 11.5 L4.5 14 L2 14 Z" fill="#d9a77a"/><path d="M11.5 2 L12.5 1 Q13 0.5 13.5 1 L15 2.5 Q15.5 3 15 3.5 L14 4.5 Z" fill="#8c9097"/></svg></div>
<div class="cb" style="left:989px;top:398.3px"><svg width="5" height="5" viewBox="0 0 10 10"><path d="M2 2 L8 8 M8 2 L2 8" stroke="#5d636b" stroke-width="2.4" stroke-linecap="round"/></svg></div>

<!-- footer -->
<div class="abs" style="left:125.6px;top:434.5px;font-size:6.8px;font-weight:bold;color:#c9cccf;line-height:8px">1-10 / 11</div>
<div class="pg" style="left:932px;width:18.7px;color:#777;font-size:9px;font-weight:bold;line-height:16px">&laquo;</div>
<div class="pg" style="left:949.7px;width:19px;background:#eff0f3">1</div>
<div class="pg" style="left:967.7px;width:19.3px">2</div>
<div class="pg" style="left:986px;width:19.9px;color:#777;font-size:9px;font-weight:bold;line-height:16px">&raquo;</div>

<div id="redc"></div>
<!-- chat bubble -->
<div class="abs" style="left:987px;top:491px;width:27px;height:27px;border-radius:50%;background:#fff;box-shadow:0 1px 4px rgba(0,0,0,0.15)"></div>
<svg class="abs" style="left:995px;top:499.5px" width="11" height="10" viewBox="0 0 11 10"><path d="M0.5 3.5 Q0.5 0.5 4 0.5 Q7.5 0.5 7.5 3.5 Q7.5 6.5 4 6.5 L2.5 6.5 L0.8 7.8 L1.3 6 Q0.5 5 0.5 3.5 Z" fill="#3d4a57"/><path d="M8.3 3 Q10.5 3.8 10.5 5.8 Q10.5 7 9.8 7.8 L10.2 9.3 L8.6 8.4 Q6 8.8 4.6 7.3 Q8.3 7 8.3 3 Z" fill="#3d4a57"/></svg>
<div class="abs" style="left:0;top:528px;width:1024px;height:1px;background:#8e9396"></div>
</body></html>
